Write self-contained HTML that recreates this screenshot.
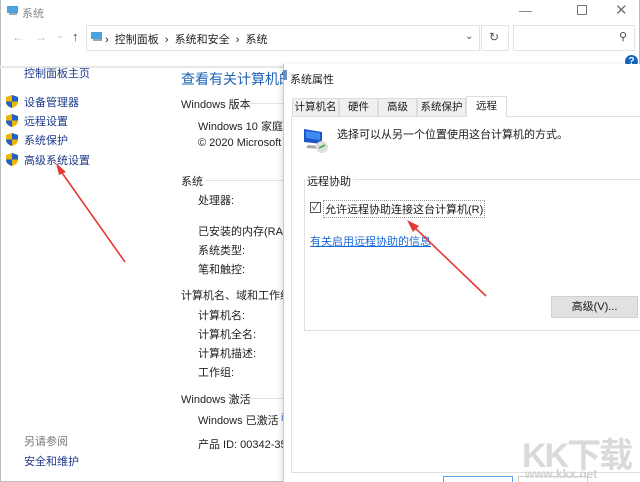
<!DOCTYPE html>
<html><head><meta charset="utf-8"><style>
*{margin:0;padding:0;box-sizing:border-box}
body{width:640px;height:482px;overflow:hidden;background:#fff;font-family:"Liberation Sans","Noto Sans CJK SC",sans-serif;font-size:11px;color:#1a1a1a;position:relative}
.a{position:absolute;white-space:nowrap}
.nav{color:#1e3a8a}
.shield{position:absolute;width:12px;height:13px}
.sec{color:#222}
.line{position:absolute;height:1px;background:#e3e3e3}
.tab{position:absolute;height:18px;background:#f0f0f0;border:1px solid #ddd;border-bottom:none;text-align:center;line-height:17px;font-size:10.5px;white-space:nowrap;overflow:hidden}
</style></head><body>
<div class="a" style="left:0;top:0;width:640px;height:482px;border:1px solid #bdbdbd;border-top:none"></div>
<svg class="a" style="left:6px;top:5px" width="14" height="12"><rect x="1" y="1" width="11" height="7" fill="#4aa3df"/><rect x="3" y="8" width="8" height="2" fill="#9aa"/></svg>
<div class="a" style="left:22px;top:5px;color:#888;font-size:11px">系统</div>
<div class="a" style="left:519px;top:3px;color:#777;font-size:13px">—</div>
<div class="a" style="left:577px;top:5px;width:10px;height:10px;border:1px solid #777"></div>
<div class="a" style="left:615px;top:1px;color:#777;font-size:15px">✕</div>
<div class="a" style="left:12px;top:30px;color:#bbb;font-size:12px">←</div>
<div class="a" style="left:35px;top:30px;color:#bbb;font-size:12px">→</div>
<div class="a" style="left:57px;top:31px;color:#bbb;font-size:8px">⌄</div>
<div class="a" style="left:72px;top:29px;color:#444;font-size:13px">↑</div>
<div class="a" style="left:86px;top:25px;width:394px;height:26px;border:1px solid #e3e3e3"></div>
<svg class="a" style="left:90px;top:31px" width="14" height="12"><rect x="1" y="1" width="11" height="7" fill="#4aa3df"/><rect x="3" y="8" width="9" height="2" fill="#9aa"/></svg>
<div class="a" style="left:105px;top:31px;font-size:11px;color:#222">›&nbsp;&nbsp;控制面板&nbsp;&nbsp;›&nbsp;&nbsp;系统和安全&nbsp;&nbsp;›&nbsp;&nbsp;系统</div>
<div class="a" style="left:465px;top:31px;color:#555;font-size:10px">⌄</div>
<div class="a" style="left:481px;top:25px;width:28px;height:26px;border:1px solid #e3e3e3"></div>
<div class="a" style="left:489px;top:30px;color:#555;font-size:12px">↻</div>
<div class="a" style="left:513px;top:25px;width:122px;height:26px;border:1px solid #e3e3e3"></div>
<div class="a" style="left:619px;top:30px;color:#444;font-size:11px">⚲</div>
<div class="a" style="left:0;top:66px;width:640px;height:2px;background:#e8e8e8"></div>
<div class="a" style="left:625px;top:55px;width:13px;height:13px;border-radius:50%;background:#1565c0;color:#fff;font-size:10px;font-weight:bold;text-align:center;line-height:13px">?</div>
<div class="a nav" style="left:24px;top:65px">控制面板主页</div>
<svg width="0" height="0" style="position:absolute"><defs><symbol id="sh" viewBox="0 0 12 13"><path d="M6 0 L12 2 V7 C12 10 9 12 6 13 C3 12 0 10 0 7 V2 Z" fill="#f0b400"/><path d="M6 0 L12 2 V6.5 H6 Z" fill="#1e62c8"/><path d="M6 6.5 H0 V7 C0 10 3 12 6 13 Z" fill="#1e62c8"/></symbol></defs></svg>
<svg class="shield" style="left:6px;top:95px"><use href="#sh"/></svg>
<svg class="shield" style="left:6px;top:114px"><use href="#sh"/></svg>
<svg class="shield" style="left:6px;top:133px"><use href="#sh"/></svg>
<svg class="shield" style="left:6px;top:153px"><use href="#sh"/></svg>
<div class="a nav" style="left:24px;top:94px">设备管理器</div>
<div class="a nav" style="left:24px;top:113px">远程设置</div>
<div class="a nav" style="left:24px;top:132px">系统保护</div>
<div class="a nav" style="left:24px;top:152px">高级系统设置</div>
<div class="a" style="left:24px;top:433px;color:#777">另请参阅</div>
<div class="a nav" style="left:24px;top:453px">安全和维护</div>
<div class="a" style="left:181px;top:69px;font-size:14px;color:#1e63b5">查看有关计算机的</div>
<div class="a sec" style="left:181px;top:96px">Windows 版本</div><div class="line" style="left:248px;top:103px;width:40px"></div>
<div class="a sec" style="left:198px;top:118px">Windows 10 家庭中</div>
<div class="a sec" style="left:198px;top:137px">© 2020 Microsoft C</div>
<div class="a sec" style="left:181px;top:173px">系统</div><div class="line" style="left:205px;top:180px;width:80px"></div>
<div class="a sec" style="left:198px;top:192px">处理器:</div>
<div class="a sec" style="left:198px;top:223px">已安装的内存(RAM</div>
<div class="a sec" style="left:198px;top:242px">系统类型:</div>
<div class="a sec" style="left:198px;top:261px">笔和触控:</div>
<div class="a sec" style="left:181px;top:287px">计算机名、域和工作组设</div>
<div class="a sec" style="left:198px;top:307px">计算机名:</div>
<div class="a sec" style="left:198px;top:326px">计算机全名:</div>
<div class="a sec" style="left:198px;top:345px">计算机描述:</div>
<div class="a sec" style="left:198px;top:364px">工作组:</div>
<div class="a sec" style="left:181px;top:391px">Windows 激活</div><div class="line" style="left:248px;top:398px;width:40px"></div>
<div class="a sec" style="left:198px;top:412px">Windows 已激活</div>
<div class="a" style="left:281px;top:412px;color:#3a7bd5">i</div>
<div class="a sec" style="left:198px;top:436px">产品 ID: 00342-355</div>
<!-- dialog -->
<div class="a" style="left:283px;top:64px;width:357px;height:418px;background:#fff;border-left:1px solid #c8c8c8;box-shadow:-3px 0 4px rgba(0,0,0,.08)"></div>
<svg class="a" style="left:283px;top:70px" width="5" height="12"><rect width="4" height="10" fill="#6a8fc0"/></svg>
<div class="a" style="left:290px;top:71px;font-size:11px;color:#222">系统属性</div>
<div class="tab" style="left:292px;top:98px;width:47px">计算机名</div>
<div class="tab" style="left:339px;top:98px;width:39px">硬件</div>
<div class="tab" style="left:378px;top:98px;width:39px">高级</div>
<div class="tab" style="left:417px;top:98px;width:49px">系统保护</div>
<div class="a" style="left:291px;top:116px;width:349px;height:357px;background:#fff;border:1px solid #e0e0e0;border-right:none"></div>
<div class="tab" style="left:466px;top:96px;width:41px;height:21px;background:#fff;line-height:19px;z-index:2">远程</div>
<svg class="a" style="left:302px;top:127px" width="30" height="28"><path d="M2 2 L20 5 V17 L2 15 Z" fill="#1f55c8"/><path d="M4 4 L18 6 V13 L4 11 Z" fill="#3d8cf0"/><path d="M6 18 L22 19 L20 22 L4 21 Z" fill="#aaa"/><circle cx="20" cy="20" r="6" fill="#ddd"/><path d="M17 21 L23 18" stroke="#2a2" stroke-width="1.5"/></svg>
<div class="a" style="left:337px;top:126px">选择可以从另一个位置使用这台计算机的方式。</div>
<div class="a" style="left:304px;top:179px;width:336px;height:152px;border:1px solid #e0e0e0;border-right:none"></div>
<div class="a" style="left:305px;top:173px;background:#fff;padding:0 2px">远程协助</div>
<div class="a" style="left:310px;top:202px;width:11px;height:11px;border:1px solid #555;font-size:10px;line-height:9px;text-align:center;color:#333">✓</div>
<div class="a" style="left:323px;top:200px;border:1px dotted #999;padding:0 1px">允许远程协助连接这台计算机(R)</div>
<div class="a" style="left:310px;top:233px;color:#1a6ad6;text-decoration:underline">有关启用远程协助的信息</div>
<div class="a" style="left:551px;top:296px;width:87px;height:22px;background:#e1e1e1;border:1px solid #d0d0d0;text-align:center;line-height:20px">高级(V)...</div>
<div class="a" style="left:443px;top:476px;width:70px;height:6px;border:1px solid #5aa0e0;border-bottom:none"></div>
<div class="a" style="left:518px;top:476px;width:70px;height:6px;border:1px solid #ccc;border-bottom:none"></div>
<div class="a" style="left:522px;top:428px;font-size:34px;font-weight:bold;color:#dadada;letter-spacing:-2px">KK下载</div>
<div class="a" style="left:525px;top:467px;font-size:12px;font-weight:bold;color:#d0d0d0">www.kkx.net</div>
<svg class="a" style="left:0;top:0" width="640" height="482">
<line x1="125" y1="262" x2="60" y2="170" stroke="#e53935" stroke-width="1.6"/>
<path d="M56 163 L66 172 L59 175 Z" fill="#e53935"/>
<line x1="486" y1="296" x2="413" y2="226" stroke="#e53935" stroke-width="1.6"/>
<path d="M407 220 L419 226 L413 232 Z" fill="#e53935"/>
</svg>
</body></html>
